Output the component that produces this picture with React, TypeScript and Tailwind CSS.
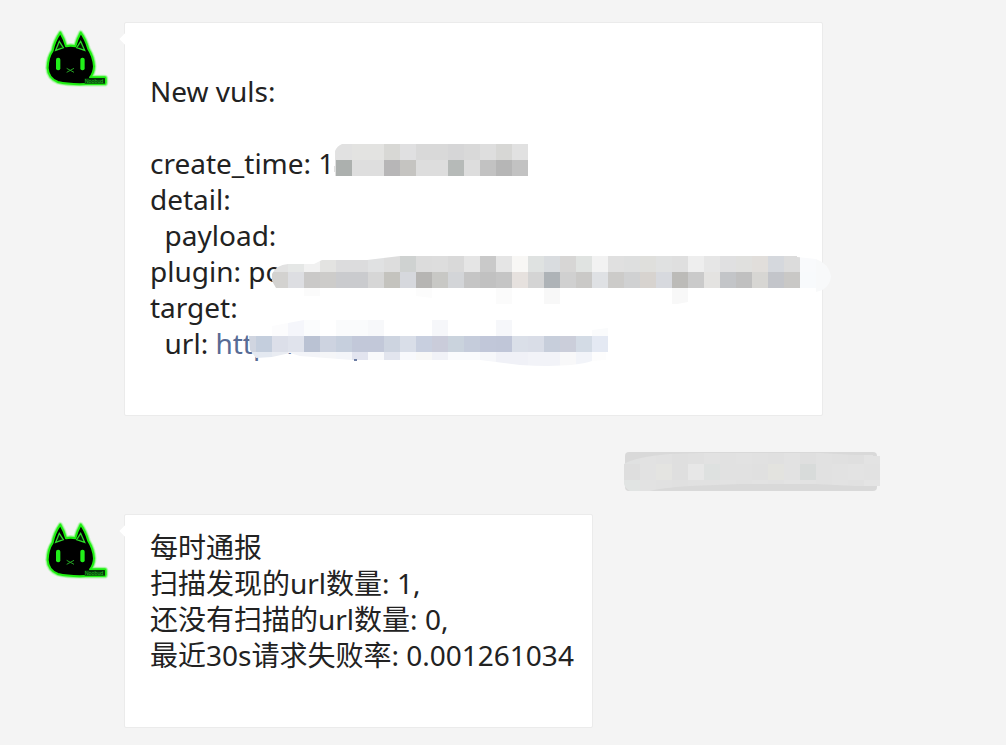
import type { ReactNode } from "react";

type Cell = [x: number, y: number, color: string];

function row(x: number, y: number, colors: string): Cell[] {
  return colors.split(" ").map((c, i) => [x + i * 16, y, "#" + c] as Cell);
}

function Mosaic({ id, cells, clip, box, className, children }: {
  id: string;
  cells: Cell[];
  clip: string;
  box: [number, number, number, number];
  className: string;
  children?: ReactNode;
}) {
  return (
    <svg aria-hidden="true" className={className} width={box[2]} height={box[3]} viewBox={box.join(" ")} shapeRendering="crispEdges">
      <clipPath id={id}>
        <path d={clip} />
      </clipPath>
      <g clipPath={`url(#${id})`}>
        {cells.map(([x, y, color]) => (
          <rect key={`${x}-${y}`} x={x} y={y} width="16" height="16" fill={color} />
        ))}
      </g>
      {children}
    </svg>
  );
}

const timeCells = [
  ...row(320, 144, "e2e2e2 e1e1e1 e3e3e1 e3e3e1 d8d8d5 e0e0e1 d9d9d9 d9d9d9 d6d6d7 d9d9d9 dedede d7d7d5 e1e1e1"),
  ...row(320, 160, "e0e0e0 acb0ae dedede dedede b7b6b7 c5c4c1 dddddd dddddd b6bab8 dddddd c2c2c2 b6b6b6 c2c2c2"),
];

const pluginCells = [
  ...row(272, 256, "e2e2e2 e5e7e6 f1f1f1 e3e3e1 dcdcdd dcdcdd e0e1e2 dddddd cfd2d1 dcdcdc dddddd d9d9d9 e5e5e5 c9c9c9 e5e5e5 f8f7f5 dfe2e1 d9dcdf d7d6d5 e0e3e1 f2f2f2 e0e0e0 dedfdf dfdfdc e0e1e1 dfdfdf eeeeee e6e6e6 e0e0e1 e0e0de e1dedb d5d8dd dcdcdc f9fafc f8f9fa"),
  ...row(272, 272, "d3d2d0 dddee2 cac9c8 cdccca cacbce cacbce d6d6d6 c4c3be d6d8dd b6b5b3 c8c8c5 d3d5d8 c5c5c5 c1c1c1 c5c5c5 e6e1de d4d4d4 aeb3b7 d0d0d0 cac9c7 dfe1e4 cccbc9 d0d1d2 d7d3cf d7d9de bcbbb8 cacaca e4e3e1 c3c5c8 c0c0c0 d7d6d3 c3c5ca c9c8c6 f8fafc f8f9fa"),
  ...row(304, 288, "fbfbfb"),
  ...row(416, 288, "fcfcfc"),
  ...row(496, 288, "fbfbfb"),
  ...row(544, 288, "f8f8f8"),
  ...row(672, 288, "f8f8f8"),
  ...row(816, 288, "f8f9fa"),
];

const urlCells = [
  ...row(272, 320, "fcfcfd f5f6fb fbfcfd ffffff fafbfc fafbfc f7f8fa"),
  ...row(432, 320, "f6f7fa"),
  ...row(496, 320, "f6f7fa"),
  ...row(592, 320, "fafbfc"),
  ...row(240, 336, "d0d5e0 c4cedd dcdfe9 e0e3ec bac2d3 cdd3e0 c6cfdd c2c8d9 c2c8d9 cdd4e0 d9dee8 c8cfdf caccda cad3dd c5ccdb c1c7d9 c0c6d8 dadfe8 d9dde7 c7cedb cbceda d3dbe5 e4e9f3"),
  ...row(240, 352, "e4e9f1 e4e9f1 e9ecf2 f3f4f8 f3f4f8 f5f6f8 f3f5f9 e2e4ef f8f9fb e2e5ee f8f9fc f8f8f7 f1f2f7 fafbfd fafbfd f6f7fa f0f1f7 f0f1f7 f2f3f8 f2f3f8 f8f8f9 f2f4f9 fdfdfd"),
];

const replyCells = [
  ...row(624, 448, "e0e1e1 e2e2e2 e1e1e1 dfdfdf e0e0e0 e2e2e2 e1e1e1 e2e2e2 e1e1e1 e0e0e0 e2e2e2 dfdfdf e1e1e1 e0e0e0 dfdfdf e3e3e3"),
  ...row(624, 464, "dedede e2e2e2 e4e4e1 dfdfdf e7e7e7 dee1e0 e1e1e1 e1e1e1 e0e0e0 e3e3df e2e2e2 d8dbda e1e1e1 e2e2e2 e3e3e3 e2e2e2"),
  ...row(624, 480, "e1e4e3 e2e2e2 e1e1e1 e0e0e0 e1e1e1 e1e1e1 e2e2e2 e1e1e1 e2e2e2 e1e1e1 e3e3e3 e2e2e2 e1e1e1 e2e2e2 e1e1e1 e4e4e4"),
];

function Avatar() {
  const body = "M73 44 Q84 62 90 85 Q104 81 118 85 Q124 62 134 44 Q148 62 157 93 Q172 116 174 145 Q173 166 162 178 H206 Q209 178 209 182 V194 Q209 198 205 198 H150 Q100 200 66 192 Q37 181 35 150 Q36 118 50 98 Q55 70 73 44 Z";
  return (
    <svg role="img" aria-label="Noobud" className="size-16 shrink-0 overflow-visible" viewBox="24 24 192 192">
      <g fill="none" strokeLinejoin="round">
        <path d={body} stroke="#5cf552" strokeWidth="16" opacity=".25" />
        <path d={body} stroke="#3df532" strokeWidth="11" opacity=".5" />
        <path d={body} fill="#000" stroke="#1fee12" strokeWidth="6" />
      </g>
      <path d="M70 70 L59 97 L82 89 Z M134 70 L122 89 L146 97 Z" fill="#051b04" stroke="#2bd927" strokeWidth="4" />
      <rect x="60" y="119" width="13" height="38" rx="6" fill="#21ef19" />
      <rect x="133" y="119" width="13" height="38" rx="6" fill="#21ef19" />
      <path d="M92 151 L114 163 M92 163 L114 151" fill="none" stroke="#25a524" strokeWidth="3" />
      <rect x="146" y="181" width="61" height="16" fill="#04300a" />
      <text x="146" y="195" fontSize="16" fontFamily="Liberation Sans, sans-serif" fill="#25c822">Noobud</text>
    </svg>
  );
}

function Message({ className, children }: { className: string; children: ReactNode }) {
  return (
    <article className="flex items-start gap-4">
      <div className="pt-1">
        <Avatar />
      </div>
      <div className={"relative rounded-xs border border-[#ebebeb] bg-white pt-3.5 pb-[18px] pl-[25px] text-[28px] leading-9 text-[#222] " + className}>
        <span className="absolute top-3 -left-1 size-2 rotate-45 bg-white" />
        {children}
      </div>
    </article>
  );
}

function Line({ children }: { children?: ReactNode }) {
  return <p className="min-h-9 whitespace-pre-wrap">{children}</p>;
}

export default function App() {
  return (
    <main className="min-h-screen bg-[#f4f4f4] pt-[22px] pr-6 pb-4 pl-11 font-['Noto_Sans','Noto_Sans_CJK_SC',sans-serif]">
      <Message className="w-full max-w-[699px] pr-4">
        <Line />
        <Line>New vuls:</Line>
        <Line />
        <Line>create_time: 1</Line>
        <Line>detail:</Line>
        <Line>{"  payload:"}</Line>
        <Line>plugin: po</Line>
        <Line>target:</Line>
        <Line>
          {"  url: "}
          <a href="http://" className="text-[#576b95]">http://</a>
        </Line>
        <Line />
        <Mosaic
          id="time" cells={timeCells} box={[334, 144, 194, 32]} className="absolute top-[121px] left-[209px]"
          clip="M342 144 H528 V176 H335 V172 H334 V166 H335 V151 Q337 146 342 144 Z"
        />
        <Mosaic
          id="plugin" cells={pluginCells} box={[272, 256, 560, 50]} className="absolute top-[233px] left-[147px] max-w-none"
          clip="M276 288 L272 281 V274 Q276 265 288 264 H314 L322 260 H367 L400 256 H797 V257 L816 259 Q829 264 831 276 Q830 289 816 292 V288 H688 V302 L672 305 V288 H560 V304 H544 V288 H512 V304 H496 V288 H432 V298 L416 296 V288 H320 V296 H304 V288 Z"
        />
        <Mosaic
          id="url" cells={urlCells} box={[248, 320, 360, 46]} className="absolute top-[297px] left-[123px]"
          clip="M249 336 L272 326 L304 320 H592 V330 L608 328 V352 H606 V360 L592 361 Q570 368 520 365 L480 360 H352 L300 356 L290 353 L272 357 L256 358 L250 350 Z"
        >
          <rect x="354" y="359" width="3" height="2" fill="#6d7ea4" />
        </Mosaic>
      </Message>

      <div className="mt-9 mr-[105px] flex justify-end">
        <div className="relative h-[39px] w-[252px] rounded-sm bg-[#d9d9d9]">
          <Mosaic
            id="reply" cells={replyCells} box={[624, 452, 256, 39]} className="absolute top-0 -left-px max-w-none"
            clip="M624 464 Q635 457 670 454 L700 453 H820 L855 455 H873 V456 H880 V486 H856 L815 484 H740 L690 486 Q660 488 650 491 H630 Q625 488 624 484 Z"
          />
        </div>
      </div>

      <div className="mt-[23px]" lang="zh-CN">
        <Message className="w-fit pr-[18px]">
          <Line>每时通报</Line>
          <Line>扫描发现的url数量: 1,</Line>
          <Line>还没有扫描的url数量: 0,</Line>
          <Line>最近30s请求失败率: 0.001261034</Line>
          <Line />
        </Message>
      </div>
    </main>
  );
}
